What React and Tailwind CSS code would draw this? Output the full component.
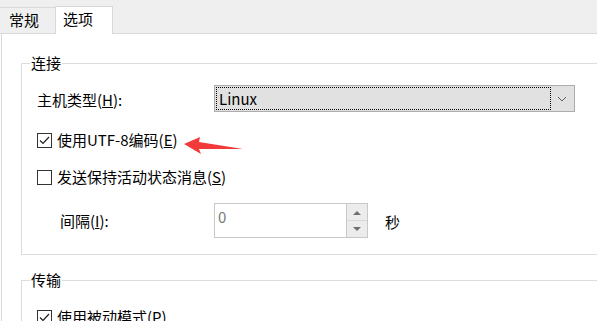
import React from "react";

const font = { fontFamily: '"Noto Sans CJK SC", "Noto Sans", sans-serif' };

const Check = ({ checked }) => (
  <span className="w-[15px] h-[15px] border border-[#333333] bg-white flex items-center justify-center shrink-0">
    {checked && (
      <svg width="11" height="9" viewBox="0 0 11 9">
        <polyline points="1,4.5 4,7.5 10,1" fill="none" stroke="#222" strokeWidth="1.2" />
      </svg>
    )}
  </span>
);

const Group = ({ title, children, className }) => (
  <div className={"relative ml-[19px] mr-[-20px] border border-[#dcdcdc] " + className}>
    <span className="absolute left-[8px] top-[-12px] bg-white px-[1px] text-[15px] leading-[22px] text-black">
      {title}
    </span>
    {children}
  </div>
);

const App = () => {
  return (
    <div className="relative w-[597px] h-[321px] overflow-hidden bg-white text-black" style={font}>
      {/* tab strip */}
      <div className="h-[34px] bg-[#efefef] border-b border-[#d9d9d9] flex items-end">
        <div className="w-[55px] h-[26px] border-t border-[#d9d9d9] text-[15px] leading-[24px] pl-[9px]">
          常规
        </div>
        <div className="relative w-[58px] h-[28px] -mb-px bg-white border-l border-t border-r border-[#d9d9d9] text-[15px] leading-[24px] pl-[7px]">
          选项
        </div>
      </div>

      <div className="ml-px h-[287px] border-l border-[#d9d9d9] pt-[29px]">
        <Group title="连接" className="pt-[21px] pb-[16px] pl-[15px]">
          <div className="flex items-center h-[27px]">
            <span className="w-[177px] text-[15px] pt-[3px]">
              主机类型(<u>H</u>):
            </span>
            <div className="w-[361px] h-[27px] bg-[#e1e1e1] border border-[#adadad] flex items-center p-[1px]">
              <div className="flex-1 h-full border border-dotted border-black text-[15px] leading-[21px] pl-[2px]">
                Linux
              </div>
              <div className="w-[22px] flex justify-center">
                <svg width="10" height="6" viewBox="0 0 10 6">
                  <polyline points="1,1 5,5 9,1" fill="none" stroke="#606060" strokeWidth="1" />
                </svg>
              </div>
            </div>
          </div>

          <div className="flex items-center h-[20px] mt-[18px] gap-[5px]">
            <Check checked />
            <span className="text-[15px]">
              使用UTF-8编码(<u>E</u>)
            </span>
          </div>

          <div className="flex items-center h-[20px] mt-[17px] gap-[5px]">
            <Check />
            <span className="text-[15px]">
              发送保持活动状态消息(<u>S</u>)
            </span>
          </div>

          <div className="flex items-center h-[35px] mt-[16px]">
            <span className="w-[177px] pl-[23px] text-[15px] pt-[2px]">
              间隔(<u>I</u>):
            </span>
            <div className="w-[154px] h-[35px] border border-[#c8c8c8] bg-white flex">
              <div className="flex-1 text-[15px] text-[#7a7a7a] pl-[3px] leading-[26px]">0</div>
              <div className="w-[21px] flex flex-col border-l border-[#c8c8c8]">
                <div className="flex-1 bg-[#ececec] border-b border-[#d8d8d8] flex items-center justify-center">
                  <svg width="8" height="5" viewBox="0 0 8 5">
                    <polygon points="0,5 4,1 8,5" fill="#707070" />
                  </svg>
                </div>
                <div className="flex-1 bg-[#ececec] flex items-center justify-center">
                  <svg width="8" height="5" viewBox="0 0 8 5">
                    <polygon points="0,0 8,0 4,4" fill="#707070" />
                  </svg>
                </div>
              </div>
            </div>
            <span className="ml-[17px] text-[15px] pt-[3px]">秒</span>
          </div>
        </Group>

        <Group title="传输" className="mt-[25px] pt-[26px] pb-[10px] pl-[15px]">
          <div className="flex items-center h-[20px] gap-[5px]">
            <Check checked />
            <span className="text-[15px]">
              使用被动模式(<u>P</u>)
            </span>
          </div>
        </Group>
      </div>

      {/* red annotation arrow */}
      <svg className="absolute left-[183px] top-[136px]" width="62" height="20" viewBox="0 0 62 20">
        <polygon points="1,8 17,1 16,6 60,13 16,13 18,18" fill="#f23a3a" />
      </svg>
    </div>
  );
};

export default App;
